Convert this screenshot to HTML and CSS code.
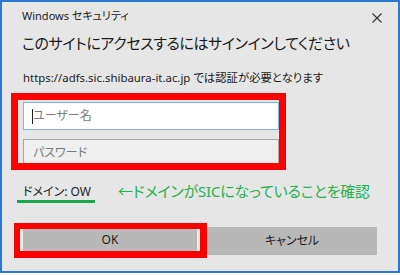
FILE: index.html
```html
<!DOCTYPE html>
<html>
  <head>
  <meta charset="utf-8">
  <link rel="stylesheet" href="styles.css">
  </head>
  <body>

  <div class="dialog">
    <div class="titlebar">
      <span class="title">Windows セキュリティ</span>
      <svg class="close" width="10" height="10" viewBox="0 0 10 10">
        <path d="M0.5 0.5 L9.5 9.5 M9.5 0.5 L0.5 9.5" stroke="#333" stroke-width="1.1" fill="none"/>
      </svg>
    </div>

    <h1 class="heading">このサイトにアクセスするにはサインインしてください</h1>
    <p class="site">https://adfs.sic.shibaura-it.ac.jp では認証が必要となります</p>

    <!-- red box marks the two fields -->
    <div class="cred">
      <div class="field user"><span class="caret"></span>ユーザー名</div>
      <div class="field pass">パスワード</div>
    </div>

    <div class="domain-row">
      <span class="domain">ドメイン: OW</span>
      <span class="note">←ドメインがSICになっていることを確認</span>
    </div>

    <div class="buttons">
      <div class="ok-mark">
        <div class="btn ok">OK</div>
      </div>
      <div class="btn cancel">キャンセル</div>
    </div>
  </div>

  </body>
</html>
```

FILE: styles.css
```css
body {
  margin: 0;
  background: #ffffff;
  font-family: "Noto Sans", "Noto Sans CJK JP", sans-serif;
  font-feature-settings: "palt";
  color: #1b1b1b;
}
.dialog {
  box-sizing: border-box;
  width: 400px;
  height: 273px;
  border: 2px solid #2b78d0;
  background: #e6e6e6;
}
.titlebar {
  display: flex;
  justify-content: space-between;
  align-items: center;
  padding: 6px 16px 0 20px;
  height: 16px;
}
.title {
  font-size: 11px;
  line-height: 16px;
  color: #222;
}
.close {
  margin-top: 4px;
  margin-right: 0;
}
.heading {
  margin: 8px 0 0 20px;
  font-size: 15px;
  letter-spacing: -0.4px;
  font-weight: normal;
  line-height: 22px;
  color: #1a1a1a;
}
.site {
  margin: 16px 0 0 21px;
  font-size: 11.4px;
  line-height: 16px;
}
.cred {
  box-sizing: border-box;
  width: 275px;
  height: 77px;
  margin: 7px 0 0 9px;
  border: 7px solid #ff0000;
  padding: 2px 0 0 5px;
  overflow: hidden;
  display: flex;
  flex-direction: column;
  gap: 9px;
}
.field {
  box-sizing: border-box;
  flex: none;
  height: 28px;
  padding-left: 9px;
  font-size: 12px;
  line-height: 26px;
  color: #7a7a7a;
  position: relative;
}
.user {
  background: #ffffff;
  border: 1px solid #7eb4ea;
}
.pass {
  height: 34px;
  background: #efefef;
  border: 1px solid #a8a8a8;
}
.caret {
  position: absolute;
  left: 8px;
  top: 6px;
  width: 1px;
  height: 15px;
  background: #222;
}
.domain-row {
  display: flex;
  align-items: flex-end;
  margin: 11px 0 0 15px;
  height: 22px;
}
.domain {
  width: 72px;
  padding-left: 6px;
  border-bottom: 3px solid #1aa64a;
  font-size: 12px;
  line-height: 17px;
  color: #222;
}
.note {
  margin-left: 23px;
  margin-bottom: 2px;
  font-size: 15px;
  letter-spacing: -0.2px;
  line-height: 20px;
  color: #22b14c;
}
.buttons {
  display: flex;
  align-items: center;
  margin: 20px 0 0 12px;
}
.ok-mark {
  border-style: solid;
  border-color: #ff0000;
  border-width: 6px 7px 7px 6px;
}
.btn {
  box-sizing: border-box;
  background: #b8b8b8;
  font-size: 12px;
  color: #1b1b1b;
  text-align: center;
}
.ok {
  width: 180px;
  height: 22px;
  line-height: 22px;
  border-left: 3px solid #ececec;
  border-right: 3px solid #ececec;
}
.cancel {
  width: 170px;
  height: 28px;
  line-height: 28px;
}
```
